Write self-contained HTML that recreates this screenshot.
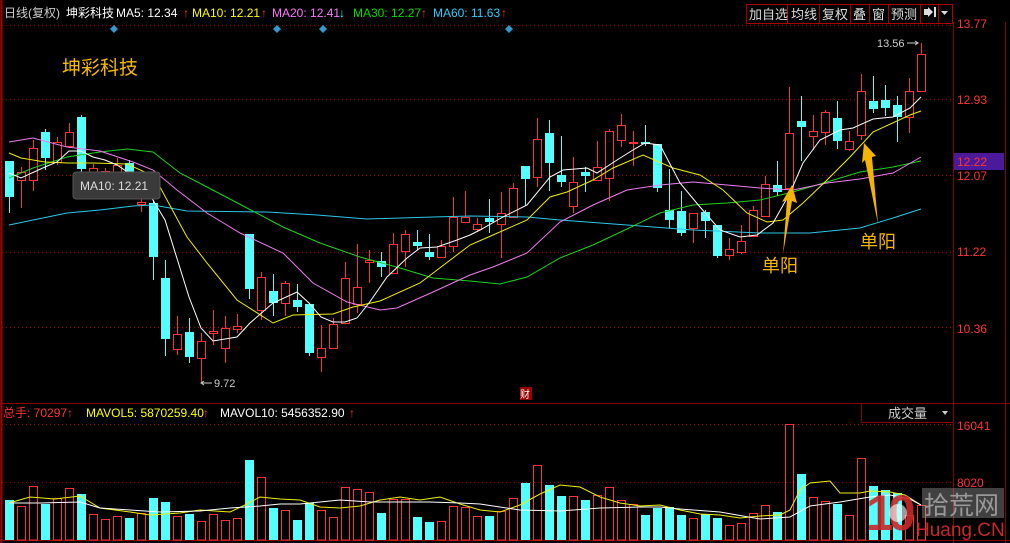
<!DOCTYPE html>
<html><head><meta charset="utf-8"><style>
body{margin:0;background:#000;width:1010px;height:543px;overflow:hidden;font-family:"Liberation Sans","Noto Sans CJK SC",sans-serif}
svg{position:absolute;left:0;top:0}
</style></head><body>
<svg id="s" width="1010" height="543" xmlns="http://www.w3.org/2000/svg" font-family="Liberation Sans, Noto Sans CJK SC, sans-serif">
<rect width="1010" height="543" fill="#000"/>
<!-- frame -->
<line x1="1.5" y1="0" x2="1.5" y2="543" stroke="#a00" stroke-width="2"/>
<line x1="953.5" y1="22" x2="953.5" y2="543" stroke="#800"/>
<line x1="1005.5" y1="22" x2="1005.5" y2="543" stroke="#800"/>
<line x1="0" y1="403.5" x2="1010" y2="403.5" stroke="#800"/>
<line x1="0" y1="540.5" x2="1010" y2="540.5" stroke="#800"/>
<g stroke="#900" stroke-dasharray="1,3">
<line x1="2" y1="25.5" x2="953" y2="25.5"/><line x1="2" y1="99.5" x2="953" y2="99.5"/>
<line x1="2" y1="175.5" x2="953" y2="175.5"/><line x1="2" y1="252.5" x2="953" y2="252.5"/>
<line x1="2" y1="327.5" x2="953" y2="327.5"/><line x1="2" y1="424.5" x2="953" y2="424.5"/>
<line x1="2" y1="482.5" x2="953" y2="482.5"/>
</g>
<!-- header -->
<text y="17" font-size="12"><tspan x="4" fill="#ccc">日线(复权)</tspan><tspan x="66" fill="#fff">坤彩科技</tspan><tspan x="116" fill="#fff">MA5: 12.34</tspan><tspan x="183" fill="#f33">↑</tspan><tspan x="192" fill="#ff0">MA10: 12.21</tspan><tspan x="261" fill="#f33">↑</tspan><tspan x="272" fill="#f7f">MA20: 12.41</tspan><tspan x="339" fill="#3ff">↓</tspan><tspan x="353" fill="#0d0">MA30: 12.27</tspan><tspan x="421" fill="#f33">↑</tspan><tspan x="433" fill="#3cf">MA60: 11.63</tspan><tspan x="501" fill="#f33">↑</tspan></text>
<g fill="#3399cc"><path d="M114 25l4 4-4 4-4-4z"/><path d="M277 25l4 4-4 4-4-4z"/><path d="M323 25l4 4-4 4-4-4z"/><path d="M509 25l4 4-4 4-4-4z"/></g>
<g stroke="#a00" fill="none"><rect x="746.5" y="4.5" width="206" height="19"/></g>
<g stroke="#a00"><line x1="787.5" y1="4" x2="787.5" y2="23"/><line x1="819.5" y1="4" x2="819.5" y2="23"/><line x1="850.5" y1="4" x2="850.5" y2="23"/><line x1="869.5" y1="4" x2="869.5" y2="23"/><line x1="888.5" y1="4" x2="888.5" y2="23"/><line x1="920.5" y1="4" x2="920.5" y2="23"/><line x1="938.5" y1="4" x2="938.5" y2="23"/></g>
<text y="19" font-size="13" fill="#ddd"><tspan x="749">加自选</tspan><tspan x="791">均线</tspan><tspan x="822">复权</tspan><tspan x="853">叠</tspan><tspan x="872">窗</tspan><tspan x="891">预测</tspan></text>
<path d="M924 9h4v-2l5 5-5 5v-2h-4z M934 7h2v10h-2z" fill="#ddd"/>
<path d="M941 11h7l-3.5 4z" fill="#ddd"/>
<!-- axis labels -->
<g font-size="12" fill="#f33"><text x="957" y="28">13.77</text><text x="957" y="104">12.93</text><text x="957" y="180">12.07</text><text x="957" y="256">11.22</text><text x="957" y="333">10.36</text><text x="957" y="430">16041</text><text x="957" y="487">8020</text></g>
<rect x="954" y="153" width="50" height="17" fill="#4a1a9a"/>
<text x="957" y="166" font-size="12" fill="#f33">12.22</text>
<g id="c"></g>
<!-- labels -->
<text x="62" y="74" font-size="19" fill="#f5b800">坤彩科技</text>
<text x="877" y="47" font-size="11" fill="#ccc">13.56</text><path d="M907 43h11m-3-2l3 2-3 2" stroke="#ccc" fill="none"/>
<text x="214" y="387" font-size="11" fill="#ccc">9.72</text><path d="M202 383h10m-8-2l-3 2 3 2" stroke="#ccc" fill="none"/>
<rect x="520" y="387" width="12" height="13" fill="#900"/><text x="520" y="398" font-size="10" fill="#fff">财</text>
<rect x="73" y="172" width="87" height="27" rx="3" fill="#3a3a3a" stroke="#555"/>
<text x="80" y="190" font-size="12" fill="#ddd">MA10: 12.21</text>
<!-- arrows -->
<path d="M783 254 L787 200 L782 202 L792 185 L797 203 L792 201 Z" fill="#f5b400"/>
<path d="M878 224 L865 160 L862 163 L864 143 L876 156 L872 157 Z" fill="#f5b400"/>
<text x="762" y="272" font-size="18" fill="#f5b400">单阳</text>
<text x="860" y="248" font-size="18" fill="#f5b400">单阳</text>
<!-- volume header -->
<text y="417" font-size="12"><tspan x="3" fill="#f33">总手: 70297↑</tspan><tspan x="86" fill="#ff0">MAVOL5: 5870259.40</tspan><tspan x="203" fill="#f33">↑</tspan><tspan x="220" fill="#fff">MAVOL10: 5456352.90</tspan><tspan x="349" fill="#f33">↑</tspan></text>
<rect x="861.5" y="403.5" width="92" height="19" fill="none" stroke="#800"/>
<text x="888" y="418" font-size="13" fill="#ccc">成交量</text><path d="M942 411h6l-3 4z" fill="#ccc"/>
<g id="v"></g>
<!-- logo -->
<text x="866" y="530" font-size="50" font-weight="bold" fill="#c82828" fill-opacity="0.9" letter-spacing="-6">10</text>
<circle cx="898" cy="513" r="9" fill="#fff" fill-opacity="0.6"/>
<rect x="922" y="488" width="82" height="30" fill="#bbb" fill-opacity="0.35"/>
<text x="924" y="514" font-size="25" fill="#999">拾荒网</text>
<text x="916" y="536" font-size="19" fill="#c82828">Huang.CN</text>
</svg>
<script>
var C=[
['c',161,197,161,213],['r',172,180,167,208],['r',148,180,140,191],['c',132,158,129,170],['r',142,162,137,165],['r',132,146,123,148],['c',117,169,115,173],['r',168,176,164,180],['r',171,173,168,176],['r',165,172,158,174],['c',163,173,160,176],['r',202,204,197,212],['c',203,257,200,280],['c',278,339,260,356],['r',334,349,316,355],['c',332,357,318,363],['r',341,358,333,383],['r',331,333,310,345],['r',328,348,316,363],['r',326,329,314,333],['c',234,289,234,299],['r',277,310,272,320],['c',291,303,274,316],['r',283,303,281,316],['c',300,307,284,312],['c',304,353,304,356],['r',348,357,325,372],['r',324,348,318,348],['r',278,323,262,323],['r',287,304,244,313],['r',260,262,250,283],['c',261,267,252,277],['r',244,273,233,273],['r',234,251,230,267],['c',242,246,230,250],['c',252,257,234,260],['r',246,257,240,257],['r',217,246,197,252],['r',217,222,191,222],['r',224,229,218,232],['c',218,222,199,233],['r',213,224,192,258],['r',188,217,183,217],['c',166,179,166,206],['r',139,177,118,187],['c',133,163,120,191],['c',175,182,136,187],['r',182,206,157,213],['c',172,176,167,192],['r',167,180,141,180],['r',131,178,129,201],['r',125,140,114,147],['r',142,143,131,166],['c',142,144,125,146],['c',144,188,144,192],['c',210,220,169,228],['c',211,233,191,236],['r',213,228,213,243],['c',212,221,210,238],['c',225,256,225,258],['r',249,255,238,260],['r',241,252,225,254],['r',210,236,206,237],['r',184,216,176,216],['c',185,192,161,196],['r',133,188,87,188],['c',121,127,96,161],['r',131,136,115,150],['r',112,132,110,145],['c',118,141,101,149],['r',141,149,131,151],['r',91,135,74,140],['c',101,109,76,113],['c',100,108,85,116],['c',105,117,96,142],['r',91,117,78,133],['r',54,91,43,91]];
var V=[500,506,486,504,498,488,494,514,519,516,518,513,498,502,516,514,521,514,520,518,460,477,508,510,520,503,510,517,487,489,492,513,499,499,517,522,521,506,507,516,516,511,498,483,465,485,496,496,500,495,487,500,504,515,508,507,515,518,514,518,525,523,513,505,512,424,474,497,501,504,515,458,486,490,493,515,505];
var h='',vh='';
C.forEach(function(d,i){var x=9.5+12*i,col=d[0]=='c'?'#54ffff':'#ff3232';
h+='<line x1="'+x+'" y1="'+d[3]+'" x2="'+x+'" y2="'+d[4]+'" stroke="'+col+'"/>';
var hgt=Math.max(1,d[2]-d[1]);
if(d[0]=='c')h+='<rect x="'+(x-4.5)+'" y="'+d[1]+'" width="9" height="'+hgt+'" fill="'+col+'"/>';
else h+='<rect x="'+(x-4)+'" y="'+(d[1]+.5)+'" width="8" height="'+hgt+'" fill="#000" stroke="'+col+'"/>';
var t=V[i];
if(d[0]=='c')vh+='<rect x="'+(x-4.5)+'" y="'+t+'" width="9" height="'+(540-t)+'" fill="#54ffff"/>';
else vh+='<rect x="'+(x-4)+'" y="'+(t+.5)+'" width="8" height="'+(539.5-t)+'" fill="none" stroke="#ff3232"/>';
});
function pl(p,c){return '<polyline points="'+p+'" fill="none" stroke="'+c+'" stroke-width="1"/>';}
var L='';
L+=pl('9,225 67,213 100,210 133,206 153,205 187,211 267,212 317,215 367,219 433,217 470,216 527,217 560,220 627,225 693,230 760,233 810,233 860,228 893,218 921,209','#2cc8e8');
L+=pl('9,178 33,168 67,157 100,152 127,149 153,152 180,173 207,187 247,208 283,227 320,243 360,257 400,268 433,278 470,281 500,284 527,277 560,258 593,245 627,229 660,213 693,205 727,203 760,200 793,192 827,182 860,172 893,167 921,161','#1ed21e');
L+=pl('9,142 33,138 67,147 100,151 133,162 153,170 177,190 207,213 240,233 283,253 313,283 347,302 380,310 397,308 433,292 470,275 493,267 527,253 560,222 593,205 627,190 660,185 693,182 727,185 760,188 793,190 827,183 860,179 893,173 921,157','#f07cf0');
L+=pl('9,153 21,158 45,162 67,163 93,163 127,164 147,173 160,187 187,237 207,263 237,300 273,323 293,315 333,314 353,307 380,301 420,283 470,245 493,235 527,220 550,197 567,192 593,180 613,168 643,155 673,168 700,175 723,190 747,213 767,222 783,220 803,203 827,180 850,157 873,132 910,115 921,111','#f0f000');
L+=pl('9,173 21,178 45,167 57,162 69,151 81,151 93,157 105,160 117,165 129,173 153,200 165,220 189,297 201,328 213,341 237,337 250,323 273,303 297,292 309,303 321,317 333,322 345,322 357,318 369,303 387,277 407,258 420,248 437,247 457,240 470,235 480,230 503,217 527,205 550,177 563,170 587,168 597,173 617,160 633,150 645,143 660,145 680,183 700,207 720,230 740,237 757,235 773,223 790,193 803,163 820,140 840,130 853,128 873,119 893,117 910,108 921,97','#fff');
var VL=pl('9,503 30,497 55,499 80,496 100,508 130,512 150,515 180,513 200,510 230,512 245,505 260,497 280,499 300,500 320,507 340,508 360,506 380,500 400,497 420,500 440,497 460,504 480,510 500,512 520,505 540,494 560,485 580,487 600,497 620,503 640,506 660,505 680,510 700,514 720,515 740,518 760,516 780,515 790,510 800,490 810,483 830,481 840,493 860,493 870,491 890,492 905,495 921,505','#f0f000')+pl('9,503 40,503 80,502 100,508 130,510 160,512 200,511 230,508 260,506 280,504 300,504 340,500 370,502 400,502 430,502 460,503 480,504 520,510 560,511 600,508 640,507 660,507 680,509 720,512 760,519 790,517 810,506 840,502 870,497 890,495 910,499 921,505','#fff');
document.getElementById('c').innerHTML=h+L;
document.getElementById('v').innerHTML=vh+VL;
</script>
</body></html>
